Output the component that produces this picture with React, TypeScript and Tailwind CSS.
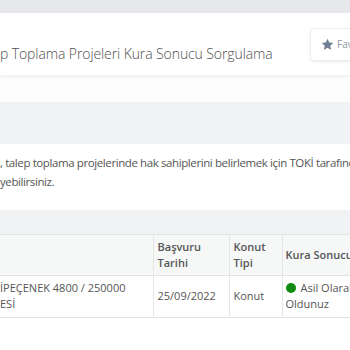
import React from 'react';

const StarIcon = () => (
  <svg width="13" height="13" viewBox="0 0 24 24" className="fill-[#6f7f93] shrink-0">
    <path d="M12 1.5l3.2 7 7.6.8-5.7 5.2 1.6 7.5L12 18.2 5.3 22l1.6-7.5L1.2 9.3l7.6-.8z" />
  </svg>
);

export default function App() {
  return (
    <div className="w-[350px] h-[350px] overflow-hidden bg-white text-[#555] font-['Open_Sans',sans-serif]">
      <div className="h-[13px] bg-[#e6e8eb]" />

      {/* page header */}
      <div className="h-[62px] bg-white flex items-center shadow-[0_2px_4px_rgba(0,0,0,0.06)] relative">
        <div className="flex-1 min-w-0 overflow-hidden">
          <h1 className="whitespace-nowrap text-[14px] tracking-[-0.1px] font-light text-[#4f4f4f] mt-[18px]">
            p Toplama Projeleri Kura Sonucu Sorgulama
          </h1>
        </div>
        <div className="shrink-0 flex items-center gap-[3px] w-[90px] h-[33px] pl-[10px] -mr-[50px] bg-white border border-[#eceef0] shadow-[0_1px_3px_rgba(0,0,0,0.08)] rounded-sm">
          <StarIcon />
          <span className="text-[10px] text-[#8a96a3] whitespace-nowrap">Favorilere Ekle</span>
        </div>
      </div>

      <div className="h-[27px] bg-[#fdfdfd]" />

      {/* content area */}
      <div className="bg-[#f1f2f4] pt-[42px]">
        <div className="bg-white h-[66px] pt-[9px] text-[11.5px] tracking-[-0.4px] leading-[19px] text-[#555] whitespace-nowrap">
          <p>, talep toplama projelerinde hak sahiplerini belirlemek için TOKİ tarafından</p>
          <p>yebilirsiniz.</p>
        </div>
        <div className="h-[24px]" />
      </div>

      {/* results table */}
      <div className="bg-white border-t border-[#e2e4e6]">
        <table className="border-collapse text-[11px] text-[#555] w-[440px] table-fixed">
          <thead>
            <tr className="bg-[#f6f7f7] h-[40px] border-b border-[#e2e2e2]">
              <th className="w-[153px] border-r border-[#e6e6e6]" />
              <th className="w-[76px] text-left font-semibold leading-[16px] pl-[4px] border-r border-[#e6e6e6]">
                Başvuru
                <br />
                Tarihi
              </th>
              <th className="w-[53px] text-left font-semibold leading-[16px] pl-[4px] border-r border-[#e6e6e6]">
                Konut
                <br />
                Tipi
              </th>
              <th className="text-left font-semibold pl-[3px] whitespace-nowrap">Kura Sonucu</th>
            </tr>
          </thead>
          <tbody>
            <tr className="h-[42px] border-b border-[#e2e2e2]">
              <td className="leading-[16px] border-r border-[#e6e6e6]">
                <div className="whitespace-nowrap">İPEÇENEK 4800 / 250000</div>
                <div>ESİ</div>
              </td>
              <td className="pl-[4px] border-r border-[#e6e6e6]">25/09/2022</td>
              <td className="pl-[4px] border-r border-[#e6e6e6]">Konut</td>
              <td className="pl-[3px] leading-[16px]">
                <div className="whitespace-nowrap flex items-center">
                  <span className="inline-block w-[10px] h-[10px] rounded-full bg-[#128a12] mr-[5px]" />
                  Asil Olarak Hak Sahibi
                </div>
                <div>Oldunuz</div>
              </td>
            </tr>
          </tbody>
        </table>
      </div>
    </div>
  );
}
